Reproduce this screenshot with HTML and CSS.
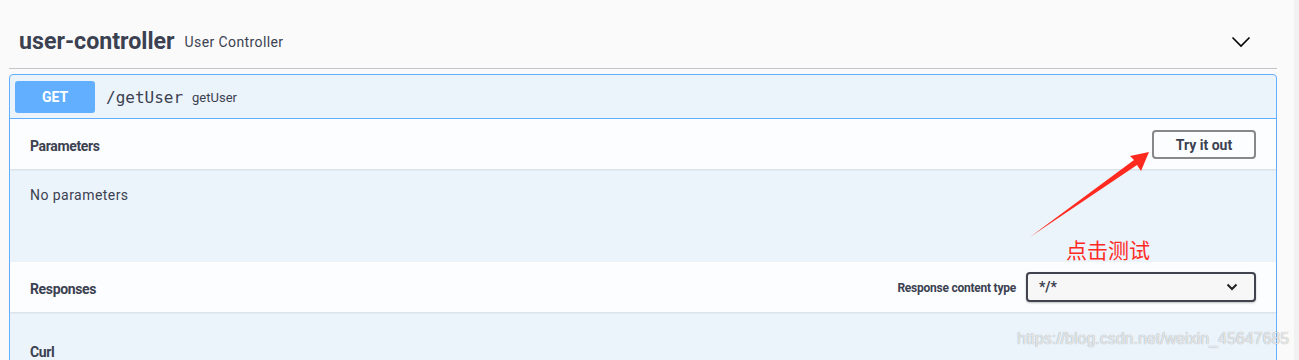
FILE: index.html
```html
<!DOCTYPE html>
<html lang="zh">
<head>
<meta charset="utf-8">
<title>user-controller</title>
<link rel="stylesheet" href="styles.css">
</head>
<body>
<div class="page">
  <div class="tag">
    <h3 class="tag-title"><span class="tag-name">user-controller</span><small class="tag-desc">User Controller</small></h3>
    <svg class="tag-arrow" width="20" height="12" viewBox="0 0 20 12"><path d="M1.5 1.5 L10 10 L18.5 1.5" fill="none" stroke="#000" stroke-width="1.6"/></svg>
  </div>
  <div class="opblock">
    <div class="summary">
      <span class="method">GET</span>
      <span class="path">/getUser</span>
      <span class="summary-desc">getUser</span>
    </div>
    <div class="section-header">
      <h4 class="section-title">Parameters</h4>
      <button class="try-out">Try it out</button>
    </div>
    <div class="params-body">
      <p class="no-params">No parameters</p>
    </div>
    <div class="section-header">
      <h4 class="section-title">Responses</h4>
      <div class="content-type">
        <span class="ct-label">Response content type</span>
        <div class="select"><span>*/*</span><svg width="12" height="8" viewBox="0 0 12 8"><path d="M1.5 1.5 L6 6 L10.5 1.5" fill="none" stroke="#222" stroke-width="2"/></svg></div>
      </div>
    </div>
    <div class="responses-body">
      <h4 class="section-title">Curl</h4>
    </div>
  </div>
</div>
<svg class="note-arrow" width="130" height="95" viewBox="0 0 130 95"><polygon points="5,92 109,15 105,11 124,7 116,26 112,20" fill="#ff2a1f"/></svg>
<div class="note-text">点击测试</div>
<div class="watermark">https://blog.csdn.net/weixin_45647685</div>
<div class="scroll-edge"></div>
</body>
</html>
```
FILE: styles.css
```css
html, body {
  margin: 0;
  padding: 0;
  height: 100%;
  overflow: hidden;
}
body {
  background: #fafafa;
  font-family: Roboto, "Noto Sans", sans-serif;
  color: #3b4151;
  position: relative;
}
.page {
  width: 1268px;
  padding-left: 9px;
  padding-top: 18px;
}
.tag {
  display: flex;
  align-items: center;
  justify-content: space-between;
  box-sizing: border-box;
  height: 51px;
  padding: 0 26px 4px 10px;
  border-bottom: 1px solid #c3c5cb;
}
.tag-title {
  margin: 0;
  display: flex;
  align-items: center;
}
.tag-name {
  font-size: 23.2px;
  font-weight: 700;
  color: #3b4151;
}
.tag-desc {
  font-size: 14px;
  font-weight: 400;
  letter-spacing: 0.4px;
  margin-left: 10px;
  padding-top: 1px;
  color: #3b4151;
}
.tag-arrow {
  display: block;
  margin-top: 2px;
}
.opblock {
  margin-top: 5px;
  border: 1px solid #61affe;
  border-radius: 4px;
  background: #ebf3fb;
  height: 400px;
}
.summary {
  display: flex;
  align-items: center;
  box-sizing: border-box;
  height: 44px;
  padding: 1px 5px 0;
  border-bottom: 1px solid #61affe;
}
.method {
  display: flex;
  align-items: center;
  justify-content: center;
  width: 80px;
  height: 32px;
  margin-top: -1px;
  padding-top: 1px;
  box-sizing: border-box;
  background: #61affe;
  border-radius: 3px;
  color: #fff;
  font-size: 14px;
  font-weight: 700;
}
.path {
  font-family: "DejaVu Sans Mono", "Liberation Mono", monospace;
  font-size: 16px;
  color: #3b4151;
  margin-left: 11px;
}
.summary-desc {
  font-size: 13px;
  margin-left: 9px;
  color: #3b4151;
}
.section-header {
  display: flex;
  align-items: center;
  justify-content: space-between;
  box-sizing: border-box;
  height: 50px;
  padding: 0 20px;
  background: rgba(255,255,255,.8);
  box-shadow: 0 1px 2px rgba(0,0,0,.1);
}
.section-title {
  margin: 0;
  padding-top: 3px;
  font-size: 14px;
  font-weight: 700;
  letter-spacing: -0.35px;
  color: #3b4151;
}
.try-out {
  box-sizing: border-box;
  width: 104px;
  height: 29px;
  margin-top: 1px;
  border: 2px solid #888;
  border-radius: 4px;
  background: transparent;
  font-family: Roboto, "Noto Sans", sans-serif;
  font-size: 14px;
  font-weight: 700;
  color: #3b4151;
  padding: 0;
}
.params-body {
  box-sizing: border-box;
  height: 93px;
  padding: 18px 20px 0;
}
.no-params {
  margin: 0;
  font-size: 14px;
  letter-spacing: 0.45px;
  color: #3b4151;
}
.content-type {
  display: flex;
  align-items: center;
}
.ct-label {
  font-size: 12px;
  font-weight: 700;
  letter-spacing: -0.24px;
  margin-right: 10px;
  padding-top: 2px;
}
.select {
  display: flex;
  align-items: center;
  justify-content: space-between;
  box-sizing: border-box;
  width: 230px;
  height: 30px;
  padding: 0 16px 0 11px;
  border: 2px solid #41444e;
  border-radius: 4px;
  background: #f7f7f7;
  box-shadow: 0 1px 2px rgba(0,0,0,.25);
  font-size: 14px;
  font-weight: 700;
}
.select svg { display: block; }
.responses-body {
  padding: 29px 20px 0;
}
.note-arrow {
  position: absolute;
  left: 1025px;
  top: 145px;
}
.note-text {
  position: absolute;
  left: 1066px;
  top: 235px;
  font-family: "Noto Sans CJK SC", sans-serif;
  font-size: 21px;
  line-height: 28px;
  color: #ff2a1f;
}
.watermark {
  position: absolute;
  left: 1017px;
  top: 330px;
  font-family: "Liberation Sans", Arial, sans-serif;
  font-size: 16px;
  color: rgba(255,255,255,.75);
  text-shadow: 0 0 1px rgba(0,0,0,.3), 0 0 1px rgba(0,0,0,.15);
}
.scroll-edge {
  position: fixed;
  right: 0;
  top: 0;
  width: 5px;
  height: 100%;
  background: #f1f1f1;
}
```
